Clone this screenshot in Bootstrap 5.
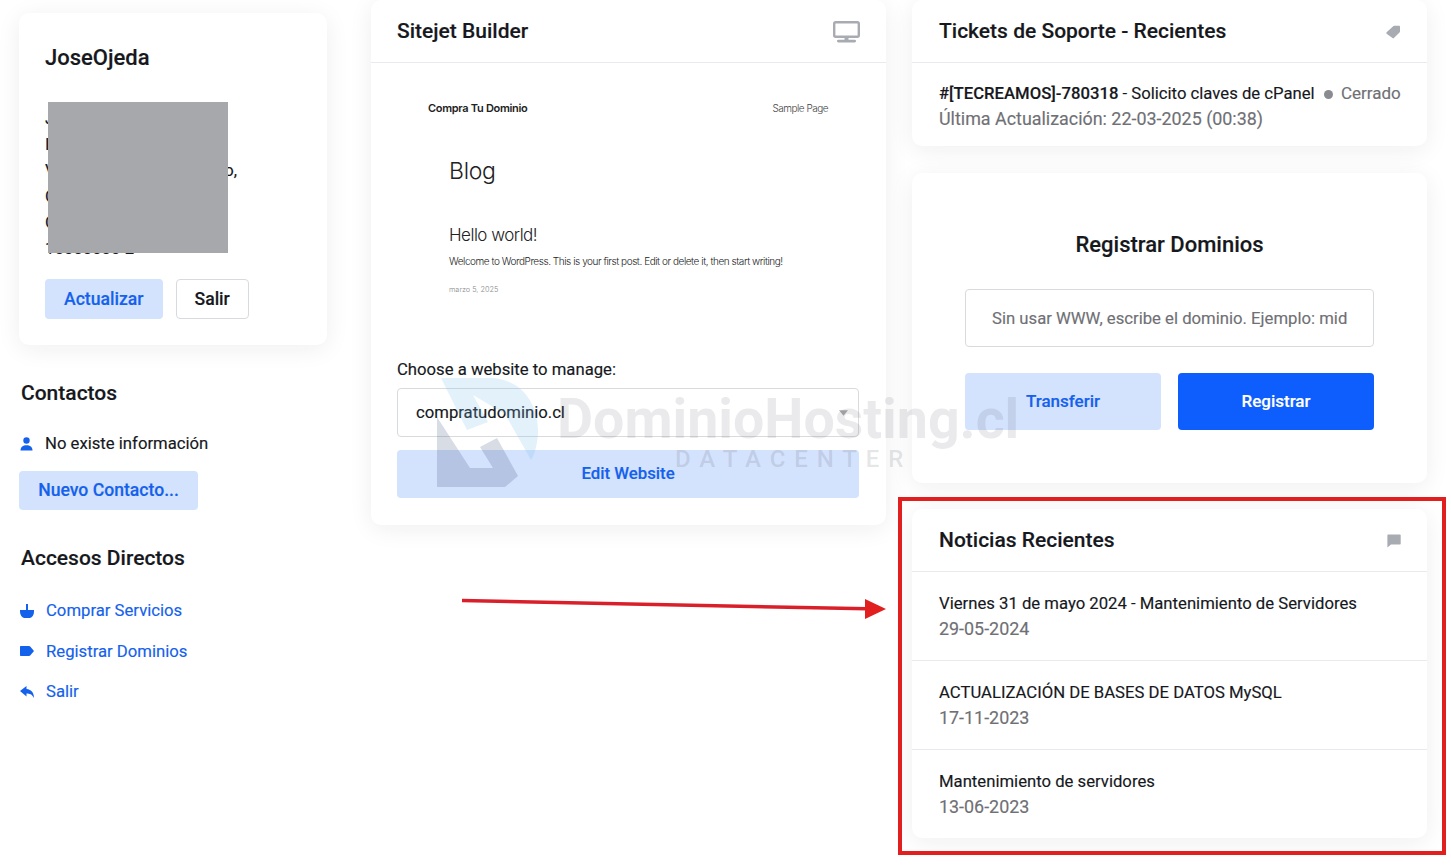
<!DOCTYPE html>
<html lang="es">
<head>
    <meta charset="UTF-8">
    <meta name="viewport" content="width=device-width, initial-scale=1.0">
    <title>Portal del Cliente</title>
    <link href="https://cdn.jsdelivr.net/npm/bootstrap@5.3.2/dist/css/bootstrap.min.css" rel="stylesheet">
    <style>
        html, body { height: 865px; overflow: hidden; }
        body {
            background: #fff;
            font-family: Roboto, "Liberation Sans", sans-serif;
            font-size: 16.7px;
            color: #16181d;
            position: relative;
            -webkit-text-stroke: 0.15px currentColor;
        }
        a { text-decoration: none; }

        .page-wrap { display: flex; align-items: flex-start; padding-left: 19px; }
        .side-col { width: 308px; padding-top: 13px; margin-right: 44px; flex: none; }
        .mid-col { width: 515px; margin-right: 26px; flex: none; }
        .right-col { width: 515px; flex: none; }

        .panel {
            border: 0;
            border-radius: 10px;
            background: #fff;
            box-shadow: 0 4px 24px rgba(30, 35, 50, 0.07);
        }
        .panel .card-header {
            background: transparent;
            border-bottom: 1px solid #e9eaed;
            height: 63px;
            padding: 1px 26px 0 27px;
            display: flex;
            align-items: center;
            justify-content: space-between;
        }
        .panel-title { font-size: 21px; font-weight: 500; margin: 0; color: #16181d; }
        .mid-col .panel-title { margin-left: -1px; }

        .profile-card { height: 332px; padding: 27px 26px 0; margin-bottom: 34px; }
        .profile-name { font-size: 22px; font-weight: 500; line-height: 36px; margin-bottom: 30px; }
        .address-lines { line-height: 26px; height: 173px; overflow: hidden; }
        .address-wide { display: flex; justify-content: space-between; width: 192px; }
        .profile-actions { display: flex; column-gap: 13px; }

        .btn-soft { background: #d3e2fd; color: #1461ec; border: 0; font-weight: 500; font-size: 17px; border-radius: 4px; }
        .btn-soft:hover { background: #c4d8fc; color: #1461ec; }
        .btn-line { background: #fff; color: #16181d; border: 1px solid #d9dadd; font-weight: 500; font-size: 17px; border-radius: 4px; }
        .btn-solid { background: #0d5efc; color: #fff; border: 0; font-weight: 500; font-size: 17px; border-radius: 4px; }
        .side-btn { font-size: 17.6px; line-height: 26px; padding: 7px 19px; }
        .side-btn.btn-line { padding: 6px 18px; }
        .contact-btn { font-size: 17.6px; line-height: 25px; padding: 7px 19px; margin-top: 15px; display: block; width: 179px; text-align: center; }

        .side-title { font-size: 21px; font-weight: 500; margin: 0 0 0 2px; line-height: 28px; }
        .side-row { display: flex; align-items: center; line-height: 25px; }
        .contact-row { margin-top: 24px; }
        .side-icon { width: 27px; flex: none; display: flex; padding-left: 1px; }
        .contact-row .side-icon { width: 26px; }
        .side-link { color: #1461ec; font-size: 16.7px; }
        .shortcut-title { margin-top: 34px; }
        .shortcut-list { display: flex; flex-direction: column; row-gap: 15.5px; margin-top: 26px; }

        .site-preview { height: 281px; color: #222; font-family: Inter, Roboto, sans-serif; -webkit-text-stroke: 0; }
        .preview-top { display: flex; justify-content: space-between; padding: 37px 58px 0 57px; line-height: 16px; }
        .preview-brand { font-size: 11px; font-weight: 600; letter-spacing: -0.3px; }
        .preview-link { font-size: 10px; font-weight: 300; color: #444; letter-spacing: -0.5px; }
        .preview-body { padding: 38px 0 0 78px; }
        .preview-h1 { font-size: 23px; font-weight: 300; line-height: 34px; margin-bottom: 35px; letter-spacing: -0.3px; }
        .preview-h2 { font-size: 17px; font-weight: 300; line-height: 24px; margin-bottom: 5px; letter-spacing: -0.5px; }
        .preview-text { font-size: 10px; font-weight: 300; line-height: 18px; margin-bottom: 14px; letter-spacing: -0.45px; }
        .preview-date { font-size: 7.3px; font-weight: 300; color: #888; line-height: 12px; }

        .site-form { padding: 14px 27px 27px 26px; }
        .site-label { display: block; font-size: 16.7px; line-height: 24px; margin-bottom: 6px; color: #16181d; }
        .site-select {
            height: 49px; border-radius: 4px; border-color: #d9dadd; color: #16181d; font-size: 16.7px;
            padding-left: 18px; margin-bottom: 13px;
            background-image: url("data:image/svg+xml,%3csvg xmlns='http://www.w3.org/2000/svg' viewBox='0 0 10 6'%3e%3cpath fill='%23aaa' d='M0 0h10L5 6z'/%3e%3c/svg%3e");
            background-size: 9px 6px;
            background-position: right 10px center;
        }
        .edit-btn { height: 48px; width: 100%; font-size: 16.8px; }

        .ticket-row { padding: 18px 26px 15px 27px; line-height: 25px; }
        .ticket-date { font-size: 17.9px; }
        .muted-text { color: #6f7075; }
        .news-date { font-size: 17.9px; }
        .status-word { font-size: 17px; }
        .status-dot { display: inline-block; width: 9px; height: 9px; border-radius: 50%; background: #8a8b90; margin: 0 4px 0 5px; }

        .domain-card { height: 310px; margin-top: 27px; margin-bottom: 26px; padding: 54px 53px 0; }
        .domain-title { font-size: 22px; font-weight: 500; text-align: center; line-height: 36px; margin-bottom: 26px; }
        .domain-input { height: 58px; border-radius: 4px; border-color: #d9dadd; font-size: 16.7px; padding: 0 26px; margin-bottom: 26px; }
        .domain-input::placeholder { color: #6f7075; }
        .domain-actions { display: flex; column-gap: 17px; }
        .domain-btn { height: 57px; flex: 1 1 0; }

        .news-item { padding: 19px 26px 0 27px; height: 89px; line-height: 25px; border-bottom: 1px solid #e9eaed; }
        .news-item:last-child { border-bottom: 0; }
        .news-list { height: 266px; }

        /* cosas que van encima del contenido */
        .redact-box { position: absolute; left: 48px; top: 102px; width: 180px; height: 151px; background: #a7a8ab; }
        .mark-box { position: absolute; left: 898px; top: 497px; width: 548px; height: 358px; border: 4px solid #e21f1f; pointer-events: none; }
        .mark-arrow { position: absolute; left: 455px; top: 590px; }
        .wm-logo { position: absolute; left: 425px; top: 370px; pointer-events: none; }
        .wm-name { position: absolute; left: 557px; top: 395px; font-size: 55.5px; font-weight: 700; line-height: 50px; color: rgba(90, 95, 105, 0.13); pointer-events: none; white-space: nowrap; -webkit-text-stroke: 0; }
        .wm-sub { position: absolute; left: 675px; top: 446px; font-size: 24px; font-weight: 500; line-height: 26px; letter-spacing: 8.9px; color: rgba(90, 95, 105, 0.17); pointer-events: none; white-space: nowrap; -webkit-text-stroke: 0; }
    </style>
</head>
<body>
    <div class="page-wrap">
        <div class="side-col">
            <div class="card panel profile-card">
                <div class="profile-name">JoseOjeda</div>
                <div class="address-lines">
                    <div>J</div>
                    <div>I</div>
                    <div class="address-wide"><span>V</span><span>o,</span></div>
                    <div>C</div>
                    <div>C</div>
                    <div>10000000-2</div>
                </div>
                <div class="profile-actions">
                    <a href="#" class="btn btn-soft side-btn">Actualizar</a>
                    <a href="#" class="btn btn-line side-btn">Salir</a>
                </div>
            </div>

            <h3 class="side-title">Contactos</h3>
            <div class="side-row contact-row">
                <span class="side-icon">
                    <svg width="13" height="14" viewBox="0 0 13 14" fill="#1461ec"><circle cx="6.5" cy="3.5" r="3.2"/><path d="M.5 13.500c0-3.500 2.500-5.300 6-5.300s6 1.800 6 5.300z"/></svg>
                </span>
                <span>No existe información</span>
            </div>
            <a href="#" class="btn btn-soft contact-btn">Nuevo Contacto...</a>

            <h3 class="side-title shortcut-title">Accesos Directos</h3>
            <div class="shortcut-list">
                <a href="#" class="side-row side-link">
                    <span class="side-icon">
                        <svg width="14" height="14" viewBox="0 0 14 14" fill="#1461ec"><rect x="6" y="0" width="2" height="6"/><path d="M0 6h14v1.500c0 3.500-2 6-4 6.500H4C2 13.500 0 11 0 7.500z"/></svg>
                    </span>Comprar Servicios
                </a>
                <a href="#" class="side-row side-link">
                    <span class="side-icon">
                        <svg width="14" height="10" viewBox="0 0 14 10"><path fill="#1461ec" d="M1 0h8c.5 0 .9.200 1.200.500L14 5l-3.800 4.500c-.3.300-.7.500-1.200.5H1c-.6 0-1-.4-1-1V1c0-.6.400-1 1-1z"/></svg>
                    </span>Registrar Dominios
                </a>
                <a href="#" class="side-row side-link">
                    <span class="side-icon">
                        <svg width="14" height="12" viewBox="0 0 14 12" fill="#1461ec"><path d="M6.500 0 0 5l6.500 5.500V7.500c3 0 5.500.6 7.500 4.500 0-5-2.500-8.500-7.500-9z"/></svg>
                    </span>Salir
                </a>
            </div>
        </div>

        <div class="mid-col">
            <div class="card panel">
                <div class="card-header">
                    <h3 class="panel-title">Sitejet Builder</h3>
                    <svg width="27" height="22" viewBox="0 0 27 22" fill="none"><rect x="1.2" y="1.2" width="24.600" height="14.600" rx="1.500" stroke="#a9abb3" stroke-width="2.400"/><rect x="4" y="18.800" width="19" height="2.600" rx="1.300" fill="#a9abb3"/><rect x="11.500" y="16" width="4" height="3" fill="#a9abb3"/></svg>
                </div>
                <div class="site-preview">
                    <div class="preview-top">
                        <span class="preview-brand">Compra Tu Dominio</span>
                        <span class="preview-link">Sample Page</span>
                    </div>
                    <div class="preview-body">
                        <div class="preview-h1">Blog</div>
                        <div class="preview-h2">Hello world!</div>
                        <div class="preview-text">Welcome to WordPress. This is your first post. Edit or delete it, then start writing!</div>
                        <div class="preview-date">marzo 5, 2025</div>
                    </div>
                </div>
                <form class="site-form">
                    <label class="site-label" for="siteSelect">Choose a website to manage:</label>
                    <select class="form-select site-select" id="siteSelect">
                        <option>compratudominio.cl</option>
                    </select>
                    <button type="button" class="btn btn-soft edit-btn">Edit Website</button>
                </form>
            </div>
        </div>

        <div class="right-col">
            <div class="card panel">
                <div class="card-header">
                    <h3 class="panel-title">Tickets de Soporte - Recientes</h3>
                    <svg width="15" height="14" viewBox="0 0 15 14" fill="#a9abb3"><path d="M7.200 1.200c.3-.3.700-.5 1.100-.5h4.700c.6 0 1 .5 1 1v4.700c0 .4-.2.800-.5 1.100l-5.600 5.600c-.4.400-1 .400-1.400 0L.6 8.700c-.4-.4-.4-1 0-1.400z"/></svg>
                </div>
                <div class="ticket-row">
                    <div class="text-nowrap"><span class="fw-medium">#[TECREAMOS]-780318</span> - Solicito claves de cPanel <span class="status-dot"></span> <span class="muted-text status-word">Cerrado</span></div>
                    <div class="muted-text ticket-date">Última Actualización: 22-03-2025 (00:38)</div>
                </div>
            </div>

            <div class="card panel domain-card">
                <div class="domain-title">Registrar Dominios</div>
                <input type="text" class="form-control domain-input" placeholder="Sin usar WWW, escribe el dominio. Ejemplo: midominio.cl">
                <div class="domain-actions">
                    <button type="button" class="btn btn-soft domain-btn">Transferir</button>
                    <button type="button" class="btn btn-solid domain-btn">Registrar</button>
                </div>
            </div>

            <div class="card panel">
                <div class="card-header">
                    <h3 class="panel-title">Noticias Recientes</h3>
                    <svg width="14" height="14" viewBox="0 0 14 14" fill="#a9abb3"><path d="M1 .5h12c.4 0 .7.3.7.7v8.600c0 .4-.3.7-.7.7H4L.4 13.500V1.200C.4.800.6.500 1 .5z"/></svg>
                </div>
                <div class="news-list">
                    <div class="news-item">
                        <div>Viernes 31 de mayo 2024 - Mantenimiento de Servidores</div>
                        <div class="muted-text news-date">29-05-2024</div>
                    </div>
                    <div class="news-item">
                        <div>ACTUALIZACIÓN DE BASES DE DATOS MySQL</div>
                        <div class="muted-text news-date">17-11-2023</div>
                    </div>
                    <div class="news-item">
                        <div>Mantenimiento de servidores</div>
                        <div class="muted-text news-date">13-06-2023</div>
                    </div>
                </div>
            </div>
        </div>
    </div>

    <div class="redact-box"></div>

    <!-- marca de agua -->
    <svg class="wm-logo" width="130" height="125" viewBox="0 0 130 125">
        <path d="M16 8H68C95 10 113 32 113 60C113 72 110 84 106 90L80 44L48 25L63 52L42 60Z" fill="#7fc0ee" opacity=".22"/>
        <path d="M12 47V117H80L93 106L72 68L55 77L68 98H45Z" fill="#3d4f7a" opacity=".2"/>
    </svg>
    <div class="wm-name">DominioHosting.cl</div>
    <div class="wm-sub">DATACENTER</div>

    <!-- anotaciones de la captura -->
    <div class="mark-box"></div>
    <svg class="mark-arrow" width="436" height="34" viewBox="0 0 436 34">
        <line x1="7" y1="10.5" x2="412" y2="18.8" stroke="#d9202a" stroke-width="3.5"/>
        <polygon points="410,9 431,19 410,29" fill="#e21f1f"/>
    </svg>

    <script src="https://cdn.jsdelivr.net/npm/bootstrap@5.3.2/dist/js/bootstrap.bundle.min.js"></script>
</body>
</html>
